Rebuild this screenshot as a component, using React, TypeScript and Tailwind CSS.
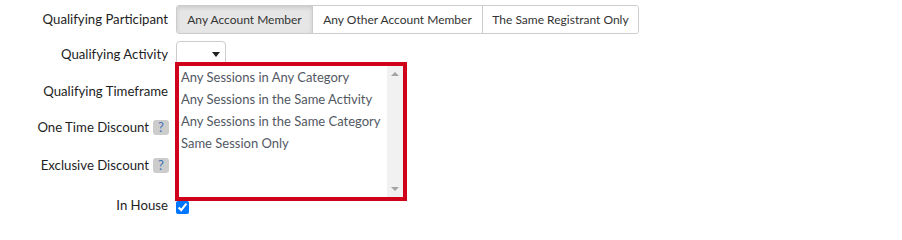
import React from "react";

const HelpIcon = () => (
  <span className="inline-flex h-[15px] w-[16px] items-center justify-center rounded-[3px] bg-[#cccccc] text-[13px] leading-none text-[#3f72b5]">
    ?
  </span>
);

const Row = ({
  label,
  help,
  className,
  children,
}: {
  label: string;
  help?: boolean;
  className: string;
  children?: React.ReactNode;
}) => (
  <div className={`flex items-center ${className}`}>
    <div
      className={`flex shrink-0 items-center justify-end gap-[4px] text-[13.2px] text-[#1e1e1e] ${
        help ? "mr-[-1px] w-[169px]" : "w-[168px]"
      }`}
    >
      <span>{label}</span>
      {help && <HelpIcon />}
    </div>
    <div className="ml-[8px] flex items-center">{children}</div>
  </div>
);

const options = [
  "Any Sessions in Any Category",
  "Any Sessions in the Same Activity",
  "Any Sessions in the Same Category",
  "Same Session Only",
];

export default function App() {
  return (
    <div className="relative h-[222px] w-[902px] overflow-hidden bg-white font-['Lato','Liberation_Sans',sans-serif]">
      <div className="flex flex-col">
        <Row label="Qualifying Participant" className="mt-[5px] h-[29px]">
          <div className="flex h-[29px] overflow-hidden rounded-[3px] border border-[#cccccc] text-[12px] text-[#333333]">
            <button className="w-[135px] bg-[#e6e6e6] shadow-[inset_0_2px_4px_rgba(0,0,0,0.12)]">
              Any Account Member
            </button>
            <button className="w-[170px] border-l border-[#cccccc] bg-white">
              Any Other Account Member
            </button>
            <button className="w-[156px] border-l border-[#cccccc] bg-white">
              The Same Registrant Only
            </button>
          </div>
        </Row>
        <Row label="Qualifying Activity" className="mt-[7px] h-[28px]">
          <div className="relative h-[28px] w-[50px] rounded-[4px] border border-[#cccccc] bg-white">
            <span className="absolute left-[35px] top-[10px] h-0 w-0 border-x-[4px] border-t-[5px] border-x-transparent border-t-[#222222]" />
          </div>
        </Row>
        <Row label="Qualifying Timeframe" className="mt-[9px] h-[28px]" />
        <Row label="One Time Discount" help className="mt-[8px] h-[28px]" />
        <Row label="Exclusive Discount" help className="mt-[10px] h-[28px]" />
        <Row label="In House" className="mt-[12px] h-[28px]">
          <input type="checkbox" defaultChecked className="mt-[3px] h-[13px] w-[13px]" />
        </Row>
      </div>

      {/* open activity dropdown, outlined in red */}
      <div className="absolute left-[175px] top-[62px] flex h-[139px] w-[232px] border-[4px] border-[#d0021b] bg-white">
        <ul className="flex-1 pl-[2px] text-[13px] leading-[22px] text-[#525863]">
          {options.map((o) => (
            <li key={o} className="whitespace-nowrap">
              {o}
            </li>
          ))}
        </ul>
        <div className="flex w-[16px] flex-col items-center justify-between bg-[#f1f1f1] py-[6px]">
          <span className="h-0 w-0 border-x-[4px] border-b-[4px] border-x-transparent border-b-[#a3a3a3]" />
          <span className="h-0 w-0 border-x-[4px] border-t-[4px] border-x-transparent border-t-[#a3a3a3]" />
        </div>
      </div>
    </div>
  );
}
